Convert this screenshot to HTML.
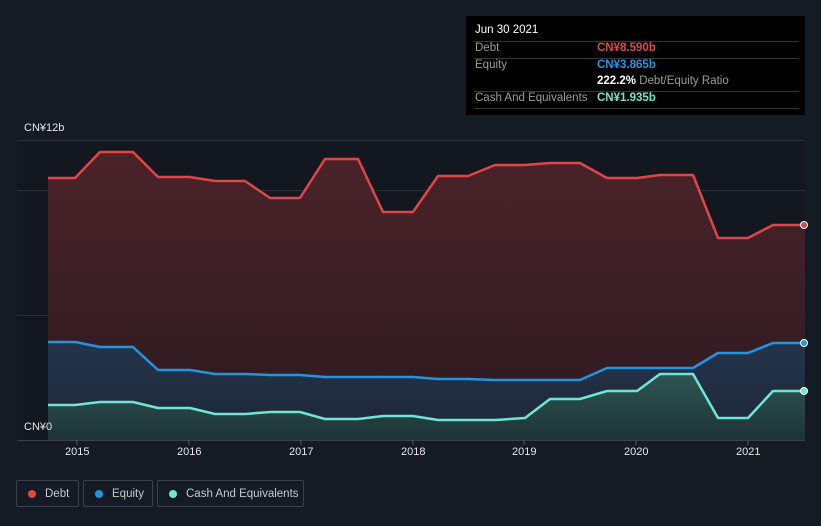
<!DOCTYPE html><html><head><style>
body{margin:0;width:821px;height:526px;background:#151b25;font-family:"Liberation Sans",sans-serif;overflow:hidden;position:relative}
.tt{position:absolute;left:466px;top:16px;width:339px;height:99px;background:#000;color:#fff;font-size:11.5px;white-space:nowrap}
.tt .r{position:absolute;left:8px;right:6px;border-top:1px solid #333}
.lbl{color:#9a9a9a}
.lg{position:absolute;top:480px;height:27px;border:1px solid #3a3f48;border-radius:2px;color:#c8c8c8;font-size:11.5px;line-height:26px;box-sizing:border-box;white-space:nowrap}
.lg i{position:absolute;left:11px;top:9px;width:8px;height:8px;border-radius:50%}
.ax{position:absolute;color:#e6e6e6;font-size:11px}
</style></head><body>
<svg width="821" height="526" style="position:absolute;left:0;top:0">
<defs>
<linearGradient id="gd" x1="0" y1="0" x2="0" y2="1"><stop offset="0" stop-color="#4a2329"/><stop offset="1" stop-color="#2b1a20"/></linearGradient>
<linearGradient id="ge" x1="0" y1="0" x2="0" y2="1"><stop offset="0" stop-color="#24344c"/><stop offset="1" stop-color="#1d2736"/></linearGradient>
<linearGradient id="gc" x1="0" y1="0" x2="0" y2="1"><stop offset="0" stop-color="#2c5653"/><stop offset="1" stop-color="#1f3337"/></linearGradient>
</defs>
<rect x="17" y="140" width="788" height="300" fill="#131820"/>
<g stroke="#2c313a" stroke-width="1"><line x1="17" y1="140.5" x2="805" y2="140.5"/><line x1="17" y1="190.5" x2="805" y2="190.5"/><line x1="17" y1="315.5" x2="805" y2="315.5"/></g>
<polygon fill="url(#gd)" points="48,440 48,178 75,178 100,152 133,152 158,177 190,177 215,181 245,181 270,198 300,198 325,159 358,159 383,212 413,212 438,176 468,176 495,165 525,165 550,163 580,163 607,178 637,178 660,175 693,175 718,238 748,238 773,225 805,225 805,440"/>
<polygon fill="url(#ge)" points="48,440 48,342 75,342 100,347 133,347 158,370 190,370 215,374 245,374 270,375 300,375 325,377 413,377 438,379 468,379 495,380 580,380 607,368 693,368 718,353 748,353 773,343 805,343 805,440"/>
<polygon fill="url(#gc)" points="48,440 48,405 75,405 100,402 133,402 158,408 190,408 215,414 245,414 270,412 300,412 325,419 358,419 383,416 413,416 438,420 495,420 525,418 550,399 580,399 607,391 637,391 660,374 693,374 718,418 748,418 773,391 805,391 805,440"/>
<g fill="none" stroke-width="2.5" stroke-linejoin="round">
<polyline stroke="#e0454a" points="48,178 75,178 100,152 133,152 158,177 190,177 215,181 245,181 270,198 300,198 325,159 358,159 383,212 413,212 438,176 468,176 495,165 525,165 550,163 580,163 607,178 637,178 660,175 693,175 718,238 748,238 773,225 805,225"/>
<polyline stroke="#2394e0" points="48,342 75,342 100,347 133,347 158,370 190,370 215,374 245,374 270,375 300,375 325,377 413,377 438,379 468,379 495,380 580,380 607,368 693,368 718,353 748,353 773,343 805,343"/>
<polyline stroke="#6ee6d2" points="48,405 75,405 100,402 133,402 158,408 190,408 215,414 245,414 270,412 300,412 325,419 358,419 383,416 413,416 438,420 495,420 525,418 550,399 580,399 607,391 637,391 660,374 693,374 718,418 748,418 773,391 805,391"/>
</g>
<circle cx="804" cy="225" r="3.5" fill="#e0454a" stroke="#fff" stroke-width="1"/>
<circle cx="804" cy="343" r="3.5" fill="#2394e0" stroke="#fff" stroke-width="1"/>
<circle cx="804" cy="391" r="3.5" fill="#6ee6d2" stroke="#fff" stroke-width="1"/>
<line x1="17" y1="440.5" x2="805" y2="440.5" stroke="#3a3f48"/>
<g stroke="#555"><line x1="77" y1="440" x2="77" y2="445"/><line x1="189" y1="440" x2="189" y2="445"/><line x1="301" y1="440" x2="301" y2="445"/><line x1="413" y1="440" x2="413" y2="445"/><line x1="524" y1="440" x2="524" y2="445"/><line x1="636" y1="440" x2="636" y2="445"/><line x1="748" y1="440" x2="748" y2="445"/></g>
</svg>
<div class="ax" style="left:24px;top:122px">CN¥12b</div>
<div class="ax" style="left:24px;top:421px">CN¥0</div>
<div class="ax" style="left:65px;top:446px">2015</div>
<div class="ax" style="left:177px;top:446px">2016</div>
<div class="ax" style="left:289px;top:446px">2017</div>
<div class="ax" style="left:401px;top:446px">2018</div>
<div class="ax" style="left:512px;top:446px">2019</div>
<div class="ax" style="left:624px;top:446px">2020</div>
<div class="ax" style="left:736px;top:446px">2021</div>
<div class="tt">
<div style="position:absolute;left:9px;top:8px">Jun 30 2021</div>
<div class="r" style="top:25px"></div>
<div class="lbl" style="position:absolute;left:9px;top:26px">Debt</div><div style="position:absolute;left:131px;top:26px;color:#e0454a;font-weight:bold">CN¥8.590b</div>
<div class="r" style="top:42px"></div>
<div class="lbl" style="position:absolute;left:9px;top:43px">Equity</div><div style="position:absolute;left:131px;top:43px;color:#2394e0;font-weight:bold">CN¥3.865b</div>
<div style="position:absolute;left:131px;top:59px"><b>222.2%</b> <span class="lbl">Debt/Equity Ratio</span></div>
<div class="r" style="top:75px"></div>
<div class="lbl" style="position:absolute;left:9px;top:76px">Cash And Equivalents</div><div style="position:absolute;left:131px;top:76px;color:#6ee6d2;font-weight:bold">CN¥1.935b</div>
<div class="r" style="top:92px"></div>
</div>
<div class="lg" style="left:16px;width:63px"><i style="background:#e0454a"></i><span style="position:absolute;left:28px">Debt</span></div>
<div class="lg" style="left:83px;width:70px"><i style="background:#2394e0"></i><span style="position:absolute;left:28px">Equity</span></div>
<div class="lg" style="left:157px;width:147px"><i style="background:#6ee6d2"></i><span style="position:absolute;left:28px">Cash And Equivalents</span></div>
</body></html>
